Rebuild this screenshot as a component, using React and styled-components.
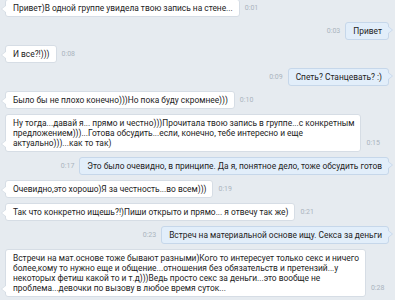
import React from "react";
import styled, { createGlobalStyle, css } from "styled-components";

const Global = createGlobalStyle`
  html, body { margin: 0; padding: 0; }
  body {
    background: #e6ebf0;
    font-family: Roboto, "Noto Sans", Arial, sans-serif;
    overflow: hidden;
  }
`;

const Chat = styled.div`
  width: 395px;
  height: 300px;
  box-sizing: border-box;
  padding: 0 6px 0 5px;
  margin-top: -1px;
  display: flex;
  flex-direction: column;
  gap: 5px;
  overflow: hidden;
`;

const Row = styled.div`
  display: flex;
  align-items: flex-end;
  gap: 5px;
  justify-content: ${(p) => (p.$out ? "flex-end" : "flex-start")};
`;

const Bubble = styled.div`
  position: relative;
  box-sizing: border-box;
  flex-shrink: 0;
  padding: 3px 6px 3px 7px;
  font-size: 8.4px;
  line-height: 10px;
  color: #222;
  border-radius: 3px;
  white-space: pre;
  ${(p) =>
    p.$out
      ? css`
          background: #e2eefa;
          border: 1px solid #c6d7ea;
        `
      : css`
          background: #ffffff;
          border: 1px solid #d6dde5;
        `}

  &::before,
  &::after {
    content: "";
    position: absolute;
    width: 0;
    height: 0;
    border-style: solid;
  }
  ${(p) =>
    p.$out
      ? css`
          &::before {
            right: -5px;
            top: 3px;
            border-width: 4px 0 4px 5px;
            border-color: transparent transparent transparent #c6d7ea;
          }
          &::after {
            right: -4px;
            top: 3px;
            border-width: 4px 0 4px 5px;
            border-color: transparent transparent transparent #e2eefa;
          }
        `
      : css`
          &::before {
            left: -5px;
            bottom: 3px;
            border-width: 4px 5px 4px 0;
            border-color: transparent #d6dde5 transparent transparent;
          }
          &::after {
            left: -4px;
            bottom: 3px;
            border-width: 4px 5px 4px 0;
            border-color: transparent #ffffff transparent transparent;
          }
        `}
`;

const Time = styled.span`
  font-size: 7px;
  line-height: 10px;
  color: #aab4be;
  padding-bottom: 4px;
  flex-shrink: 0;
`;

const messages = [
  { out: false, time: "0:01", text: "Привет)В одной группе увидела твою запись на стене..." },
  { out: true, time: "0:03", text: "Привет" },
  { out: false, time: "0:08", text: "И все?!)))" },
  { out: true, time: "0:09", text: "Спеть? Станцевать? :)" },
  { out: false, time: "0:10", text: "Было бы не плохо конечно)))Но пока буду скромнее)))" },
  {
    out: false,
    time: "0:15",
    text:
      "Ну тогда...давай я... прямо и честно)))Прочитала твою запись в группе...с конкретным\nпредложением)))...Готова обсудить...если, конечно, тебе интересно и еще\nактуально)))...как то так)",
  },
  { out: true, time: "0:17", text: "Это было очевидно, в принципе. Да я, понятное дело, тоже обсудить готов" },
  { out: false, time: "0:19", text: "Очевидно,это хорошо)Я за честность...во всем)))" },
  { out: false, time: "0:21", text: "Так что конкретно ищешь?!)Пиши открыто и прямо... я отвечу так же)" },
  { out: true, time: "0:23", text: "Встреч на материальной основе ищу. Секса за деньги" },
  {
    out: false,
    time: "0:28",
    text:
      "Встречи на мат.основе тоже бывают разными)Кого то интересует только секс и ничего\nболее,кому то нужно еще и общение...отношения без обязательств и претензий...у\nнекоторых фетиш какой то и т.д)))Ведь просто секс за деньги...это вообще не\nпроблема...девочки по вызову в любое время суток...",
  },
];

export default function App() {
  return (
    <>
      <Global />
      <Chat>
        {messages.map((m, i) => (
          <Row key={i} $out={m.out}>
            {m.out && <Time>{m.time}</Time>}
            <Bubble $out={m.out}>{m.text}</Bubble>
            {!m.out && <Time>{m.time}</Time>}
          </Row>
        ))}
      </Chat>
    </>
  );
}
